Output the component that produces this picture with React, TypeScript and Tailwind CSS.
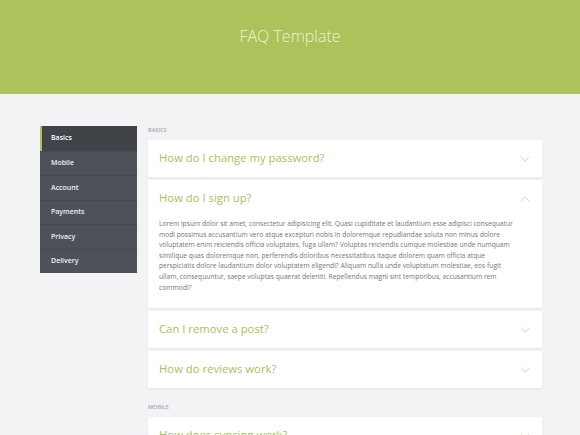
const categories = ["Basics", "Mobile", "Account", "Payments", "Privacy", "Delivery"];

const answer = [
  "Lorem ipsum dolor sit amet, consectetur adipisicing elit. Quasi cupiditate et laudantium esse adipisci consequatur",
  "modi possimus accusantium vero atque excepturi nobis in doloremque repudiandae soluta non minus dolore",
  "voluptatem enim reiciendis officia voluptates, fuga ullam? Voluptas reiciendis cumque molestiae unde numquam",
  "similique quas doloremque non, perferendis doloribus necessitatibus itaque dolorem quam officia atque",
  "perspiciatis dolore laudantium dolor voluptatem eligendi? Aliquam nulla unde voluptatum molestiae, eos fugit",
  "ullam, consequuntur, saepe voluptas quaerat deleniti. Repellendus magni sint temporibus, accusantium rem",
  "commodi?",
];

function Chevron({ up }: Readonly<{ up?: boolean }>) {
  return (
    <svg viewBox="0 0 10 6" className="h-[6px] w-[10px]" aria-hidden="true">
      <polyline
        points={up ? "0.5,5.5 5,1 9.5,5.5" : "0.5,0.5 5,5 9.5,0.5"}
        fill="none"
        stroke="#d3dfb0"
        strokeWidth="1"
      />
    </svg>
  );
}

function Question({ title, open }: Readonly<{ title: string; open?: boolean }>) {
  return (
    <div className="bg-white shadow-[0_1px_2px_rgba(0,0,0,0.06)]">
      <div className="flex h-[37px] items-center justify-between pl-[11px] pr-[12px]">
        <span className="text-[11.3px] text-[#a6c15c]">{title}</span>
        <Chevron up={open} />
      </div>
      {open ? (
        <div className="pb-[15px] pl-[11px] pt-[2px] text-[6.7px] leading-[10.6px] text-[#72767e]">
          {answer.map((line) => (
            <div key={line} className="whitespace-nowrap">
              {line}
            </div>
          ))}
        </div>
      ) : null}
    </div>
  );
}

export default function App() {
  return (
    <div className="min-h-[435px] bg-[#f3f3f6] font-['Open_Sans',sans-serif]">
      <header className="flex h-[94px] items-start justify-center bg-[#abc35a] pt-[24px]">
        <h1 className="text-[16px] font-light text-[#eef4d8]">FAQ Template</h1>
      </header>

      <div className="flex gap-[11px] pl-[40px] pt-[32px]">
        <nav className="h-[147px] w-[97px] bg-[#4e5258]">
          {categories.map((c, i) => (
            <div
              key={c}
              className={
                i === 0
                  ? "flex h-[24.5px] items-center border-l-2 border-[#abc35a] bg-[#404347] pl-[9px] text-[7px] font-semibold text-white"
                  : "flex h-[24.5px] items-center border-t border-[#474a50] pl-[11px] text-[7px] font-semibold text-[#f0f0f2]"
              }
            >
              {c}
            </div>
          ))}
        </nav>

        <main className="w-[394px]">
          <div className="mb-[6px] h-[8px] text-[5.5px] font-semibold uppercase leading-[8px] text-[#a2a4ab]">
            Basics
          </div>
          <div className="flex flex-col gap-[3px]">
            <Question title="How do I change my password?" />
            <Question title="How do I sign up?" open />
            <Question title="Can I remove a post?" />
            <Question title="How do reviews work?" />
          </div>
          <div className="mb-[6px] mt-[15px] h-[8px] text-[5.5px] font-semibold uppercase leading-[8px] text-[#a2a4ab]">
            Mobile
          </div>
          <div className="flex flex-col gap-[3px]">
            <Question title="How does syncing work?" />
          </div>
        </main>
      </div>
    </div>
  );
}
